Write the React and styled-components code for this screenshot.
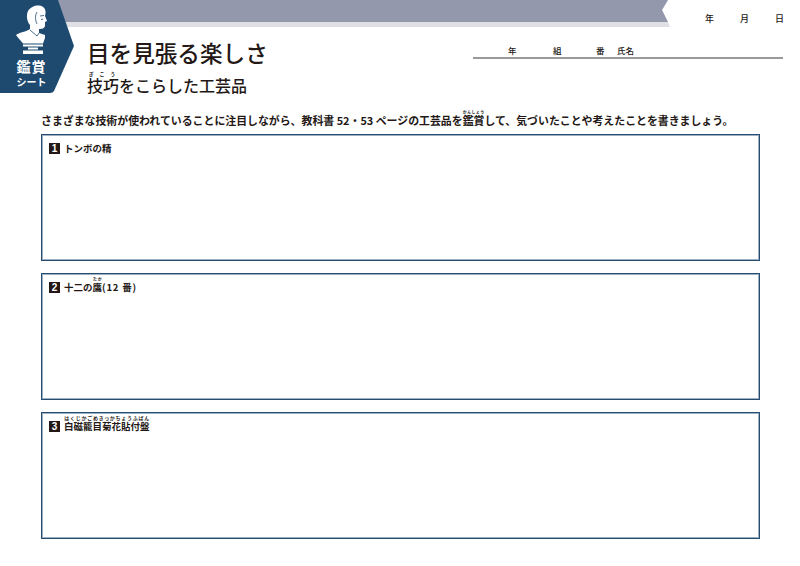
import React from 'react';
import styled, {createGlobalStyle} from 'styled-components';

const Global = createGlobalStyle`
  html, body {
    margin: 0;
    padding: 0;
    background: #fff;
  }
  body {
    font-family: "Noto Sans CJK JP", "Noto Sans", sans-serif;
    color: #231815;
  }
`;

const Page = styled.div`
  position: relative;
  width: 800px;
  height: 566px;
  overflow: hidden;
  background: #fff;
`;

const Badge = styled.svg`
  position: absolute;
  top: 0;
  left: 0;
  width: 75px;
  height: 94px;
`;

const BadgeText = styled.div`
  position: absolute;
  top: 57px;
  left: 0;
  width: 63px;
  text-align: center;
  color: #fff;
  font-weight: 700;
`;

const BadgeTitle = styled.div`
  font-size: 14px;
  line-height: 18px;
  letter-spacing: 1px;
`;

const BadgeSub = styled.div`
  font-size: 10px;
  line-height: 13px;
`;

const TopRow = styled.div`
  display: flex;
  height: 27px;
  padding-left: 55px;
`;

const BandWrap = styled.div`
  width: 615px;
  background: #dfe0e6;
  clip-path: polygon(0 0, 613px 0, 607px 10px, 613px 22px, 615px 27px, 0 27px);
`;

const Band = styled.div`
  height: 22px;
  background: #9498ad;
`;

const DateRow = styled.div`
  display: flex;
  flex: 1;
  padding: 12px 0 0 35px;
  gap: 26px;
`;

const DateItem = styled.span`
  font-size: 9px;
  line-height: 13px;
  font-weight: 500;
`;

const Header = styled.header`
  display: flex;
  justify-content: space-between;
  height: 52px;
  padding: 9px 17px 0 87px;
`;

const TitleBlock = styled.div`
  display: flex;
  flex-direction: column;
`;

const Title = styled.h1`
  margin: 0;
  font-size: 22.6px;
  line-height: 34px;
  font-weight: 500;
`;

const Subtitle = styled.h2`
  margin: 1px 0 0;
  font-size: 16px;
  line-height: 22px;
  font-weight: 500;
`;

const Furi = styled.ruby`
  ruby-position: over;
  rt {
    font-size: ${props => props.$rt || 5}px;
    font-weight: 700;
    line-height: 1;
    letter-spacing: ${props => props.$sp || 0}px;
  }
`;

const NameLine = styled.div`
  display: flex;
  align-items: flex-end;
  width: 310px;
  height: 23px;
  padding-left: 35px;
  box-sizing: border-box;
  border-bottom: 2px solid #9a9a9a;
`;

const NameLabel = styled.span`
  width: ${props => props.$w}px;
  font-size: 8.5px;
  line-height: 13px;
  font-weight: 500;
`;

const Main = styled.main`
  padding: 0 41px;
`;

const Lead = styled.p`
  margin: 0;
  height: 40px;
  display: flex;
  align-items: flex-end;
  font-size: 10.9px;
  line-height: 15px;
  font-weight: 700;
  white-space: nowrap;
`;

const Boxes = styled.div`
  display: flex;
  flex-direction: column;
  gap: 12px;
  margin-top: 6px;
  width: 719px;
`;

const Box = styled.section`
  box-sizing: border-box;
  height: 127px;
  padding: 6px 7px;
  border: 1px solid #264e73;
  box-shadow: inset 0 0 0 1px rgba(38, 78, 115, 0.45);
`;

const BoxHead = styled.div`
  display: flex;
  align-items: flex-end;
  gap: 4px;
  height: 14px;
  font-size: 9.5px;
  line-height: 14px;
  font-weight: 700;
`;

const NumMark = styled.span`
  display: inline-flex;
  align-items: center;
  justify-content: center;
  width: 11px;
  height: 11px;
  margin-bottom: 1px;
  background: #231815;
  color: #fff;
  font-family: "Liberation Sans", sans-serif;
  font-size: 10px;
  line-height: 11px;
  font-weight: 700;
`;

const Paren = styled.span`
  letter-spacing: 0.8px;
`;

// bust + pedestal on the badge
const BustLogo = () => (
  <Badge viewBox="0 0 75 94">
    <path d="M0 0H58L74 46L54 91Q53 93 50 93H0Z" fill="#1f4a70" />
    <path
      d="M28 11C31 6 39 4 43 7C46 9 46 13 45 16L47 21L45 22L45 26C44 29 41 29 39 29L39 33L45 35L45 38L43 43.500L23 43.500C20 40 18 38 16 35C20 32 26 32 30 29L30 25C27 22 26 15 28 11Z"
      fill="#fff"
    />
    <path
      d="M40 16L44 15.500M41 19.500L43 19.200M30 30L37 36L39 33M37 12C35 15 35 20 37 24"
      fill="none"
      stroke="#1f4a70"
      strokeWidth="0.8"
    />
    <path d="M23 44.500H43V46.500H23ZM28 47.500H38V49.500H28ZM23 50.500H43V54H23Z" fill="#fff" />
  </Badge>
);

export default function App() {
  return (
    <Page>
      <Global />
      <TopRow>
        <BandWrap>
          <Band />
        </BandWrap>
        <DateRow>
          <DateItem>年</DateItem>
          <DateItem>月</DateItem>
          <DateItem>日</DateItem>
        </DateRow>
      </TopRow>
      <BustLogo />
      <BadgeText>
        <BadgeTitle>鑑賞</BadgeTitle>
        <BadgeSub>シート</BadgeSub>
      </BadgeText>
      <Header>
        <TitleBlock>
          <Title>目を見張る楽しさ</Title>
          <Subtitle>
            <Furi $sp={2}>技巧<rt>ぎこう</rt></Furi>をこらした工芸品
          </Subtitle>
        </TitleBlock>
        <NameLine>
          <NameLabel $w={45}>年</NameLabel>
          <NameLabel $w={43}>組</NameLabel>
          <NameLabel $w={21}>番</NameLabel>
          <NameLabel $w={30}>氏名</NameLabel>
        </NameLine>
      </Header>
      <Main>
        <Lead>
          <span>
            さまざまな技術が使われていることに注目しながら、教科書 52・53 ページの工芸品を
            <Furi $rt={4}>鑑賞<rt>かんしょう</rt></Furi>
            して、気づいたことや考えたことを書きましょう。
          </span>
        </Lead>
        <Boxes>
          <Box>
            <BoxHead>
              <NumMark>1</NumMark>
              <span>トンボの精</span>
            </BoxHead>
          </Box>
          <Box>
            <BoxHead>
              <NumMark>2</NumMark>
              <span>十二の<Furi $rt={4}>鷹<rt>たか</rt></Furi><Paren>(12 番)</Paren></span>
            </BoxHead>
          </Box>
          <Box>
            <BoxHead>
              <NumMark>3</NumMark>
              <span><Furi>白磁籠目菊花貼付盤<rt>はくじかごめきっかちょうふばん</rt></Furi></span>
            </BoxHead>
          </Box>
        </Boxes>
      </Main>
    </Page>
  );
}
